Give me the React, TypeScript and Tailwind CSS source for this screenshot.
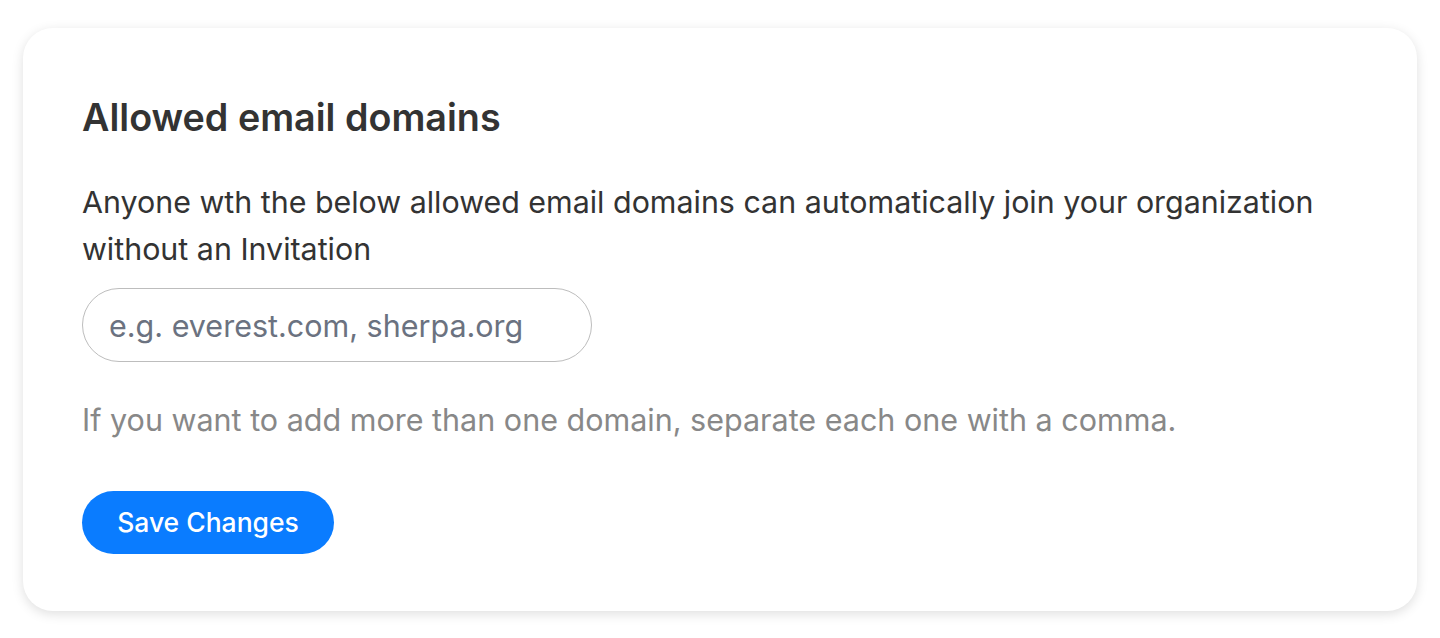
export default function App() {
  return (
    <div className="min-h-screen w-full bg-white px-[23px] pt-[28px] pb-[27px] font-['Inter',sans-serif]">
      <div className="w-full rounded-[30px] bg-white px-[59px] pt-[65px] pb-[57px] shadow-[0_3px_12px_rgba(0,0,0,0.13)]">
        <h2 className="text-[37.7px] font-semibold leading-[48px] text-[#333333]">Allowed email domains</h2>
        <p className="mt-[38px] text-[30.4px] leading-[47px] text-[#333333]">
          Anyone wth the below allowed email domains can automatically join your organization without an Invitation
        </p>
        <input
          type="text"
          placeholder="e.g. everest.com, sherpa.org"
          className="mt-[15px] block h-[74px] w-[510px] rounded-full border-[1.5px] border-[#bdbdbd] px-[26px] text-[30.5px] text-[#333333] outline-none placeholder:text-[#6b7280]"
        />
        <p className="mt-[34px] text-[30.5px] leading-[47px] text-[#888888]">
          If you want to add more than one domain, separate each one with a comma.
        </p>
        <button className="mt-[48px] block h-[63px] w-[252px] rounded-full bg-[#0a7cff] text-[26.5px] font-medium text-white">
          Save Changes
        </button>
      </div>
    </div>
  );
}
